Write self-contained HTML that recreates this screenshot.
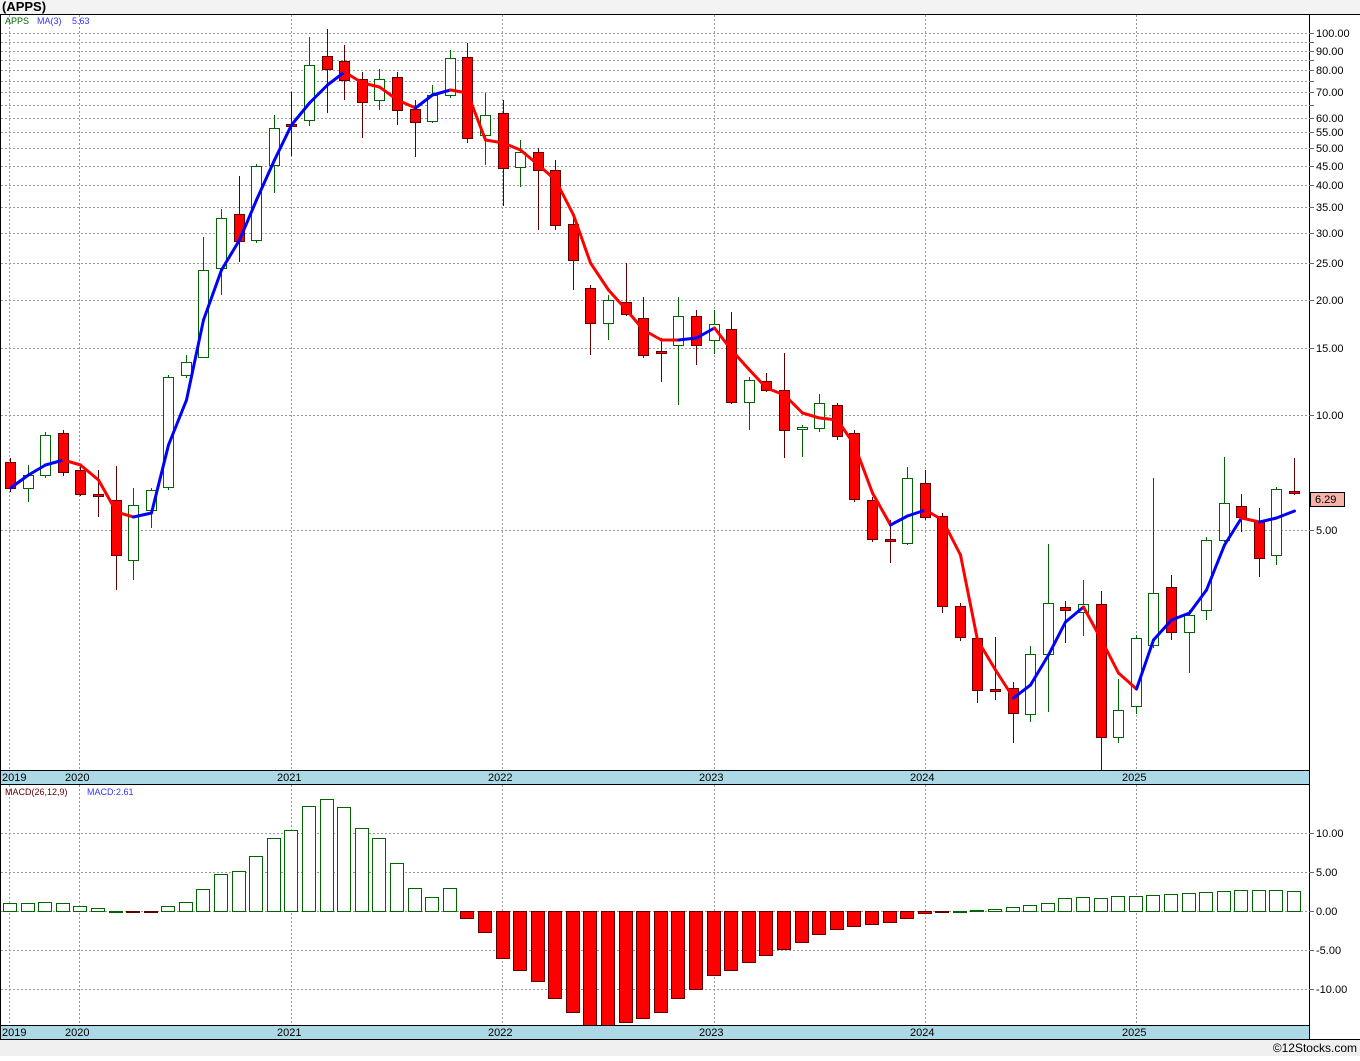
<!DOCTYPE html>
<html><head><meta charset="utf-8"><style>
html,body{margin:0;padding:0;background:#fff;}
body{width:1360px;height:1056px;overflow:hidden;font-family:"Liberation Sans","DejaVu Sans",sans-serif;}
svg text{font-family:"Liberation Sans","DejaVu Sans",sans-serif;}
</style></head><body>
<svg id="s" width="1360" height="1056" xmlns="http://www.w3.org/2000/svg" shape-rendering="crispEdges">
<rect x="0" y="0" width="1360" height="14" fill="#f3f3f3"/>
<text x="2" y="11" font-size="13" font-weight="bold" fill="#000">(APPS)</text>
<rect x="0" y="1040" width="1360" height="16" fill="#f0f0f0"/>
<text x="1357" y="1052" font-size="12" text-anchor="end" fill="#000">©12Stocks.com</text>
<g id="grid" stroke="#999" stroke-width="1" stroke-dasharray="2,2"></g>
<g id="cd"></g>
<g id="ma" shape-rendering="auto"></g>
<rect x="1" y="770" width="1308" height="14" fill="#add8e6"/>
<rect x="1" y="1025" width="1308" height="14" fill="#add8e6"/>
<line x1="0" y1="14.5" x2="1360" y2="14.5" stroke="#000"/>
<line x1="1" y1="770.5" x2="1309" y2="770.5" stroke="#000"/>
<line x1="1" y1="784.5" x2="1309" y2="784.5" stroke="#000"/>
<line x1="1" y1="1025.5" x2="1309" y2="1025.5" stroke="#000"/>
<line x1="0" y1="1039.5" x2="1360" y2="1039.5" stroke="#000"/>
<line x1="0.5" y1="14" x2="0.5" y2="1040" stroke="#000"/>
<line x1="1309.5" y1="14" x2="1309.5" y2="1040" stroke="#000"/>
<g font-size="11" fill="#000">
<text x="2" y="781">2019</text><text x="65" y="781">2020</text><text x="277" y="781">2021</text><text x="488" y="781">2022</text><text x="699" y="781">2023</text><text x="910" y="781">2024</text><text x="1122" y="781">2025</text>
<text x="2" y="1036">2019</text><text x="65" y="1036">2020</text><text x="277" y="1036">2021</text><text x="488" y="1036">2022</text><text x="699" y="1036">2023</text><text x="910" y="1036">2024</text><text x="1122" y="1036">2025</text>
</g>
<g font-size="11" fill="#000" id="ax">
<text x="1316" y="37">100.00</text><text x="1316" y="55">90.00</text><text x="1316" y="74">80.00</text><text x="1316" y="96">70.00</text>
<text x="1316" y="122">60.00</text><text x="1316" y="136">55.00</text><text x="1316" y="152">50.00</text><text x="1316" y="170">45.00</text>
<text x="1316" y="189">40.00</text><text x="1316" y="211">35.00</text><text x="1316" y="237">30.00</text><text x="1316" y="267">25.00</text>
<text x="1316" y="304">20.00</text><text x="1316" y="352">15.00</text><text x="1316" y="419">10.00</text><text x="1316" y="534">5.00</text>
<text x="1316" y="837">10.00</text><text x="1316" y="876">5.00</text><text x="1316" y="915">0.00</text><text x="1316" y="954">-5.00</text><text x="1316" y="993">-10.00</text>
</g>
<rect x="1310.5" y="492.5" width="34" height="14" fill="#f7b2aa" stroke="#000"/>
<text x="1315" y="503" font-size="11" fill="#000">6.29</text>
<text x="5" y="24" font-size="9" fill="#006400">APPS</text>
<text x="37" y="24" font-size="9" fill="#3333ff">MA(3)</text>
<text x="72" y="24" font-size="9" fill="#3333ff">5.63</text>
<text x="5" y="795" font-size="9" fill="#600000">MACD(26,12,9)</text>
<text x="87" y="795" font-size="9" fill="#3333ff">MACD:2.61</text>
</svg>
<script>
var NS="http://www.w3.org/2000/svg";
function el(p,t,a){var e=document.createElementNS(NS,t);for(var k in a)e.setAttribute(k,a[k]);p.appendChild(e);return e;}
var g=document.getElementById('grid'),s=document.getElementById('s');
[33,42,51,60,70,81,92,105,118,132,148,166,185,207,233,263,300,348,415,530].forEach(function(y){el(g,'line',{x1:1,x2:1309,y1:y+.5,y2:y+.5});el(s,'line',{x1:1309,x2:1314,y1:y+.5,y2:y+.5,stroke:'#666'});});
[833,872,911,950,989].forEach(function(y){el(g,'line',{x1:1,x2:1309,y1:y+.5,y2:y+.5});el(s,'line',{x1:1309,x2:1314,y1:y+.5,y2:y+.5,stroke:'#666'});});
[9,79,291,502,714,925,1136].forEach(function(x){el(g,'line',{x1:x+.5,x2:x+.5,y1:15,y2:770});el(g,'line',{x1:x+.5,x2:x+.5,y1:785,y2:1025});});
var C=[[458,462,488,492,1],[465,475,488,502,0],[432,435,475,478,0],[430,433,472,476,1],[466,470,494,496,1],[470,494,496,517,1],[466,500,555,590,1],[488,505,560,580,0],[488,490,510,528,0],[375,377,487,490,0],[355,362,375,378,0],[237,270,357,358,0],[209,218,268,295,0],[176,214,241,262,1],[164,166,240,243,0],[115,128,165,193,0],[92,124,126,156,1],[37,65,120,126,0],[29,56,69,113,1],[45,61,80,100,1],[72,79,102,138,1],[69,79,100,110,0],[72,77,110,125,1],[100,109,122,157,1],[85,95,121,123,0],[50,58,95,98,0],[43,57,138,143,1],[93,115,135,165,0],[100,113,168,206,1],[140,152,167,187,0],[148,152,170,230,1],[160,170,225,230,1],[215,224,260,290,1],[285,288,323,355,1],[295,300,323,340,0],[263,302,314,316,1],[297,318,355,358,1],[338,351,353,382,1],[297,316,345,405,0],[310,316,345,365,1],[310,324,340,354,0],[312,329,402,404,1],[377,380,402,430,0],[373,381,390,392,1],[353,390,430,458,1],[425,427,429,457,0],[394,403,428,432,0],[403,405,436,440,1],[430,433,499,502,1],[497,500,539,542,1],[520,539,541,563,1],[467,478,543,545,0],[470,483,517,520,1],[513,516,606,613,1],[603,606,637,641,1],[636,638,690,703,1],[637,689,691,700,1],[682,688,713,743,1],[646,654,714,722,0],[544,603,654,712,0],[601,607,610,643,1],[580,604,612,636,0],[591,604,737,770,1],[679,710,737,743,0],[635,638,706,714,0],[478,593,645,648,0],[575,587,632,640,1],[610,615,632,673,0],[537,540,610,620,0],[457,503,540,542,0],[494,506,517,532,1],[508,522,558,577,1],[487,489,555,565,0],[458,491,493,495,1]];
var M=[903,903,902,903,906,908,911,912,912,906,902,889,874,871,856,838,830,806,799,807,828,838,863,888,897,888,918,932,958,970,981,998,1012,1025,1025,1022,1018,1012,998,989,975,970,962,955,949,942,934,929,926,924,922,918,913,912,911,910,909,907,905,903,898,897,898,896,896,895,894,893,892,891,890,890,890,891];
var MA=[488,475,465,460,465,480,512,517,513,445,400,320,270,240,200,160,125,103,85,72,83,87,100,108,95,90,93,140,143,150,165,180,215,263,290,310,330,340,340,338,328,350,370,388,395,413,418,420,445,493,525,516,510,520,555,640,670,698,685,655,622,607,640,673,689,640,620,613,590,545,518,522,518,511];
var cd=document.getElementById('cd'),mg=document.getElementById('ma');
function X(i){return Math.round(10+i*17.59);}
C.forEach(function(c,i){var x=X(i),red=c[4],col=red?'#600000':'#006400';
 el(cd,'line',{x1:x+.5,x2:x+.5,y1:c[0],y2:c[3],stroke:col});
 var h=Math.max(1,c[2]-c[1]);
 el(cd,'rect',{x:x-5+.5,y:c[1]+.5,width:10,height:h,fill:red?'#ff0000':'#fff',stroke:col});
});
M.forEach(function(v,i){var x=X(i),y0=911;var neg=v>y0;
 el(cd,'rect',{x:x-7+.5,y:Math.min(v,y0)+.5,width:13,height:Math.max(1,Math.abs(v-y0)),fill:neg?'#ff0000':'#fff',stroke:neg?'#600000':'#006400'});});
for(var i=1;i<MA.length;i++){el(mg,'line',{x1:X(i-1)+.5,y1:MA[i-1],x2:X(i)+.5,y2:MA[i],stroke:MA[i]<MA[i-1]?'#0000ff':'#ff0000','stroke-width':3,'stroke-linecap':'round'});}
</script>
</body></html>
